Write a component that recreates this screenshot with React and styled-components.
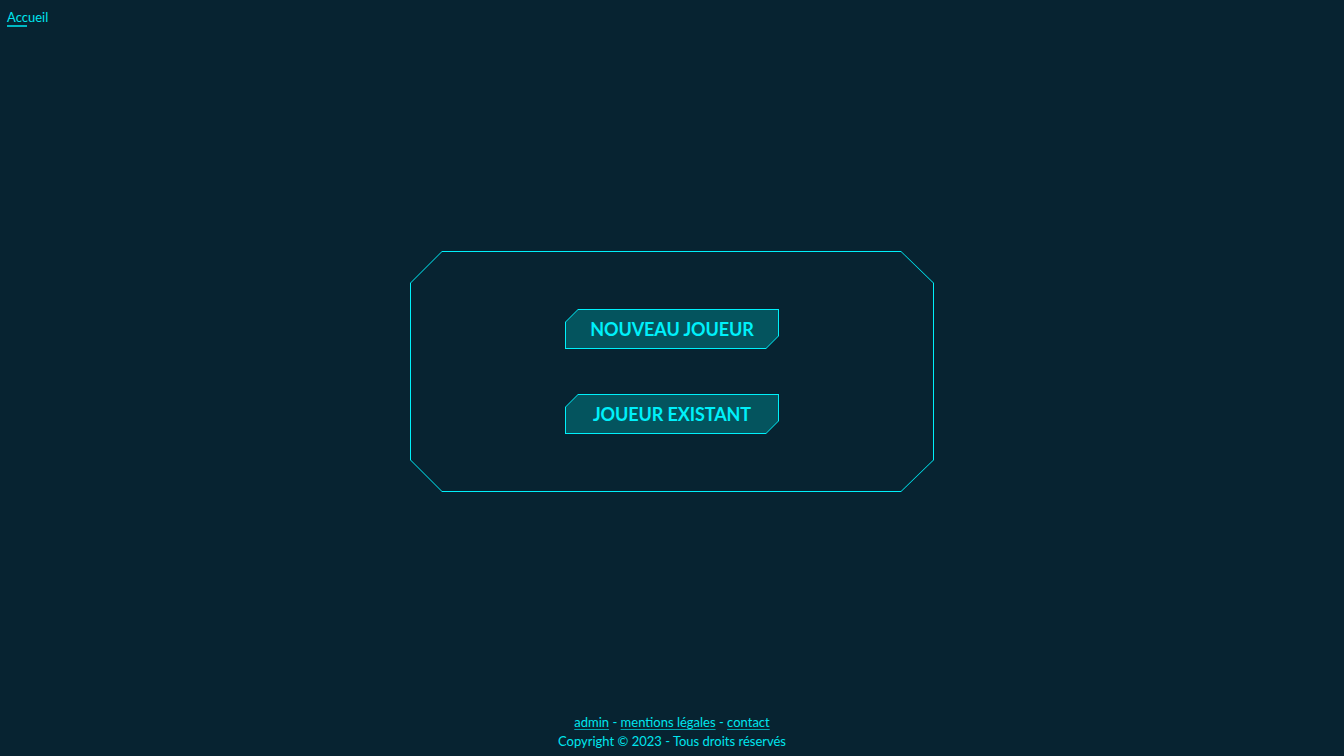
import React from 'react'
import styled, { createGlobalStyle } from 'styled-components'

const GlobalStyle = createGlobalStyle`
  html, body {
    margin: 0;
    padding: 0;
    background-color: #072331;
    font-family: Lato, "Open Sans", sans-serif;
  }
  * { box-sizing: border-box; }
`

const Page = styled.div`
  min-height: 100vh;
  display: flex;
  flex-direction: column;
  color: #00e6ee;
`

const Header = styled.nav`
  padding: 6px 7px 0;
  height: 40px;
`

const HomeLink = styled.a`
  position: relative;
  color: #00e6ee;
  font-size: 13px;
  text-decoration: none;
  display: inline-block;
  &::after {
    content: '';
    position: absolute;
    left: 0;
    bottom: -2px;
    width: 20px;
    height: 2px;
    background-color: #00b8c4;
  }
`

const Main = styled.main`
  flex: 1;
  display: flex;
  align-items: center;
  justify-content: center;
  padding-bottom: 10px;
`

const Frame = styled.div`
  position: relative;
  width: 524px;
  height: 241px;
  display: flex;
  flex-direction: column;
  align-items: center;
  justify-content: center;
  gap: 45px;
  background-color: #00f0fa;
  clip-path: polygon(32px 0, calc(100% - 33px) 0, 100% 32px, 100% calc(100% - 32px), calc(100% - 33px) 100%, 32px 100%, 0 calc(100% - 32px), 0 32px);
  &::before {
    content: '';
    position: absolute;
    inset: 1px;
    background-color: #072331;
    clip-path: polygon(31px 0, calc(100% - 32px) 0, 100% 31px, 100% calc(100% - 31px), calc(100% - 32px) 100%, 31px 100%, 0 calc(100% - 31px), 0 31px);
  }
`

const CutButton = styled.button`
  position: relative;
  width: 214px;
  height: 40px;
  border: none;
  padding: 0;
  cursor: pointer;
  background-color: #00f0fa;
  clip-path: polygon(13px 0, 100% 0, 100% calc(100% - 13px), calc(100% - 13px) 100%, 0 100%, 0 13px);
  &::before {
    content: '';
    position: absolute;
    inset: 1px;
    background-color: #04545e;
    clip-path: polygon(12px 0, 100% 0, 100% calc(100% - 12px), calc(100% - 12px) 100%, 0 100%, 0 12px);
  }
  span {
    position: relative;
    color: #00f0fa;
    font-family: Lato, "Open Sans", sans-serif;
    font-weight: 700;
    font-size: 18px;
    letter-spacing: -0.1px;
  }
`

const Footer = styled.footer`
  text-align: center;
  font-size: 13px;
  line-height: 19px;
  padding-bottom: 5px;
  color: #00e6ee;
`

const FootLink = styled.a`
  color: #00e6ee;
  text-decoration: underline;
  text-decoration-color: #00a6b0;
  text-underline-offset: 2px;
`

const App = () => {
  return (
    <Page>
      <GlobalStyle />
      <Header>
        <HomeLink href="#">Accueil</HomeLink>
      </Header>
      <Main>
        <Frame>
          <CutButton><span>NOUVEAU JOUEUR</span></CutButton>
          <CutButton><span>JOUEUR EXISTANT</span></CutButton>
        </Frame>
      </Main>
      <Footer>
        <div>
          <FootLink href="#">admin</FootLink> - <FootLink href="#">mentions légales</FootLink> - <FootLink href="#">contact</FootLink>
        </div>
        <div>Copyright © 2023 - Tous droits réservés</div>
      </Footer>
    </Page>
  )
}

export default App
